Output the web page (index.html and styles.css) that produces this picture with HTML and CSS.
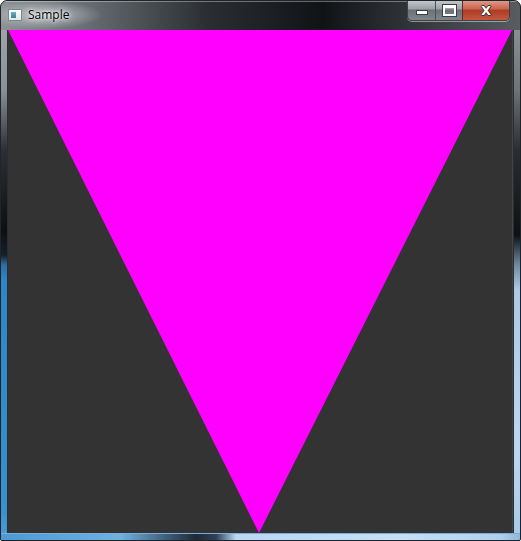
FILE: index.html
```html
<!DOCTYPE html>
<html>
<head>
<meta charset="utf-8">
<link rel="stylesheet" href="styles.css">
</head>
<body>
<div class="window">
  <div class="titlebar">
    <div class="app-icon"><span class="app-icon-left"></span></div>
    <div class="title">Sample</div>
    <div class="spacer"></div>
    <div class="controls">
      <div class="btn btn-min"><span class="glyph-min"></span></div>
      <div class="btn btn-max"><span class="glyph-max"></span></div>
      <div class="btn btn-close"><span class="glyph-close">X</span></div>
    </div>
  </div>
  <div class="body-row">
    <div class="frame-left"></div>
    <div class="client">
      <svg class="scene" width="504" height="503" viewBox="0 0 504 503">
        <polygon points="0,0 504,0 251,503" fill="#ff00ff"/>
      </svg>
    </div>
    <div class="frame-right"></div>
  </div>
  <div class="frame-bottom"></div>
</div>
</body>
</html>
```
FILE: styles.css
```css
html, body {
  margin: 0;
  padding: 0;
  background: #ffffff;
  width: 521px;
  height: 541px;
  overflow: hidden;
}
.window {
  width: 521px;
  height: 541px;
  box-sizing: border-box;
  display: flex;
  flex-direction: column;
  border: 1px solid #202428;
  border-radius: 7px 7px 2px 2px;
  overflow: hidden;
  background: #3a3f44;
}
.titlebar {
  height: 29px;
  display: flex;
  align-items: flex-start;
  background:
    radial-gradient(ellipse 60px 14px at 42px 14px, rgba(210,215,220,0.75), rgba(210,215,220,0) 100%),
    linear-gradient(90deg, #8e9296 0%, #6b7176 15%, #2a2e32 40%, #101316 62%, #2a2e32 75%, #595d61 100%);
  box-shadow: inset 0 1px 0 rgba(255,255,255,0.35);
}
.app-icon {
  width: 14px;
  height: 12px;
  margin: 8px 0 0 7px;
  background: linear-gradient(180deg, #ffffff, #dfe6ea);
  border: 1px solid #7a8a92;
  box-sizing: border-box;
  display: flex;
  padding: 2px;
}
.app-icon-left {
  width: 5px;
  height: 100%;
  background: linear-gradient(180deg, #6fb0c8, #3c7f8c);
}
.title {
  margin: 6px 0 0 6px;
  font-family: "Open Sans", "Noto Sans", sans-serif;
  font-size: 12px;
  line-height: 16px;
  color: #000;
  text-shadow: 0 0 6px #fff, 0 0 3px #fff;
}
.spacer { flex: 1; }
.controls {
  display: flex;
  margin-right: 10px;
  margin-top: -1px;
  height: 20px;
  border: 1px solid #3c4246;
  border-top: none;
  border-radius: 0 0 5px 5px;
  overflow: hidden;
  box-shadow: 0 1px 0 rgba(255,255,255,0.45);
}
.btn {
  height: 20px;
  display: flex;
  align-items: center;
  justify-content: center;
  box-sizing: border-box;
}
.btn-min {
  width: 28px;
  background: linear-gradient(180deg, #c8ccd0 0%, #9aa0a5 45%, #6b7277 50%, #7e868b 100%);
  border-right: 1px solid #4a5055;
}
.btn-max {
  width: 27px;
  background: linear-gradient(180deg, #c8ccd0 0%, #9aa0a5 45%, #6b7277 50%, #7e868b 100%);
  border-right: 1px solid #5a3028;
}
.btn-close {
  width: 46px;
  background: linear-gradient(180deg, #e0a090 0%, #c9634c 45%, #b03a22 52%, #c25a40 100%);
}
.glyph-min {
  width: 10px;
  height: 3px;
  margin-top: 5px;
  background: #fff;
  border: 1px solid #3a3f44;
}
.glyph-max {
  width: 9px;
  height: 6px;
  border: 2px solid #fff;
  border-top-width: 3px;
  outline: 1px solid #3a3f44;
}
.glyph-close {
  font-family: "DejaVu Sans", sans-serif;
  font-weight: bold;
  font-size: 13px;
  line-height: 13px;
  color: #fff;
  text-shadow: 0 0 1px #333, 1px 0 0 #333, -1px 0 0 #333, 0 1px 0 #333, 0 -1px 0 #333;
}
.body-row {
  display: flex;
  height: 503px;
}
.frame-left {
  width: 7px;
  background: linear-gradient(180deg, #9ea3a7 0px, #8b9196 60px, #2c3034 120px, #0d1013 200px, #15202c 225px, #2f6ea0 235px, #2c86c8 250px, #3a90cc 480px, #4a9ad4 503px);
  box-shadow: inset -1px 0 0 #2a2e32;
}
.frame-right {
  width: 7px;
  background: linear-gradient(180deg, #8a8f93 0px, #6e7378 60px, #2a2e32 120px, #0e1114 205px, #6f8aa0 235px, #a9cbe8 260px, #b8d8f2 420px, #a7cbe8 503px);
  box-shadow: inset 1px 0 0 #2a2e32;
}
.client {
  width: 505px;
  height: 503px;
  background: #333333;
  box-sizing: border-box;
  border-right: 1px solid #444;
  overflow: hidden;
}
.scene { display: block; }
.frame-bottom {
  flex: 1;
  background: linear-gradient(90deg, #4a9ad4 0px, #6fb0e0 120px, #1d2a38 195px, #2c4156 215px, #b8d8f4 235px, #c4e0f8 400px, #aed0ee 500px, #8ab4d8 521px);
  box-shadow: inset 0 1px 0 #7aaed8;
}
```
